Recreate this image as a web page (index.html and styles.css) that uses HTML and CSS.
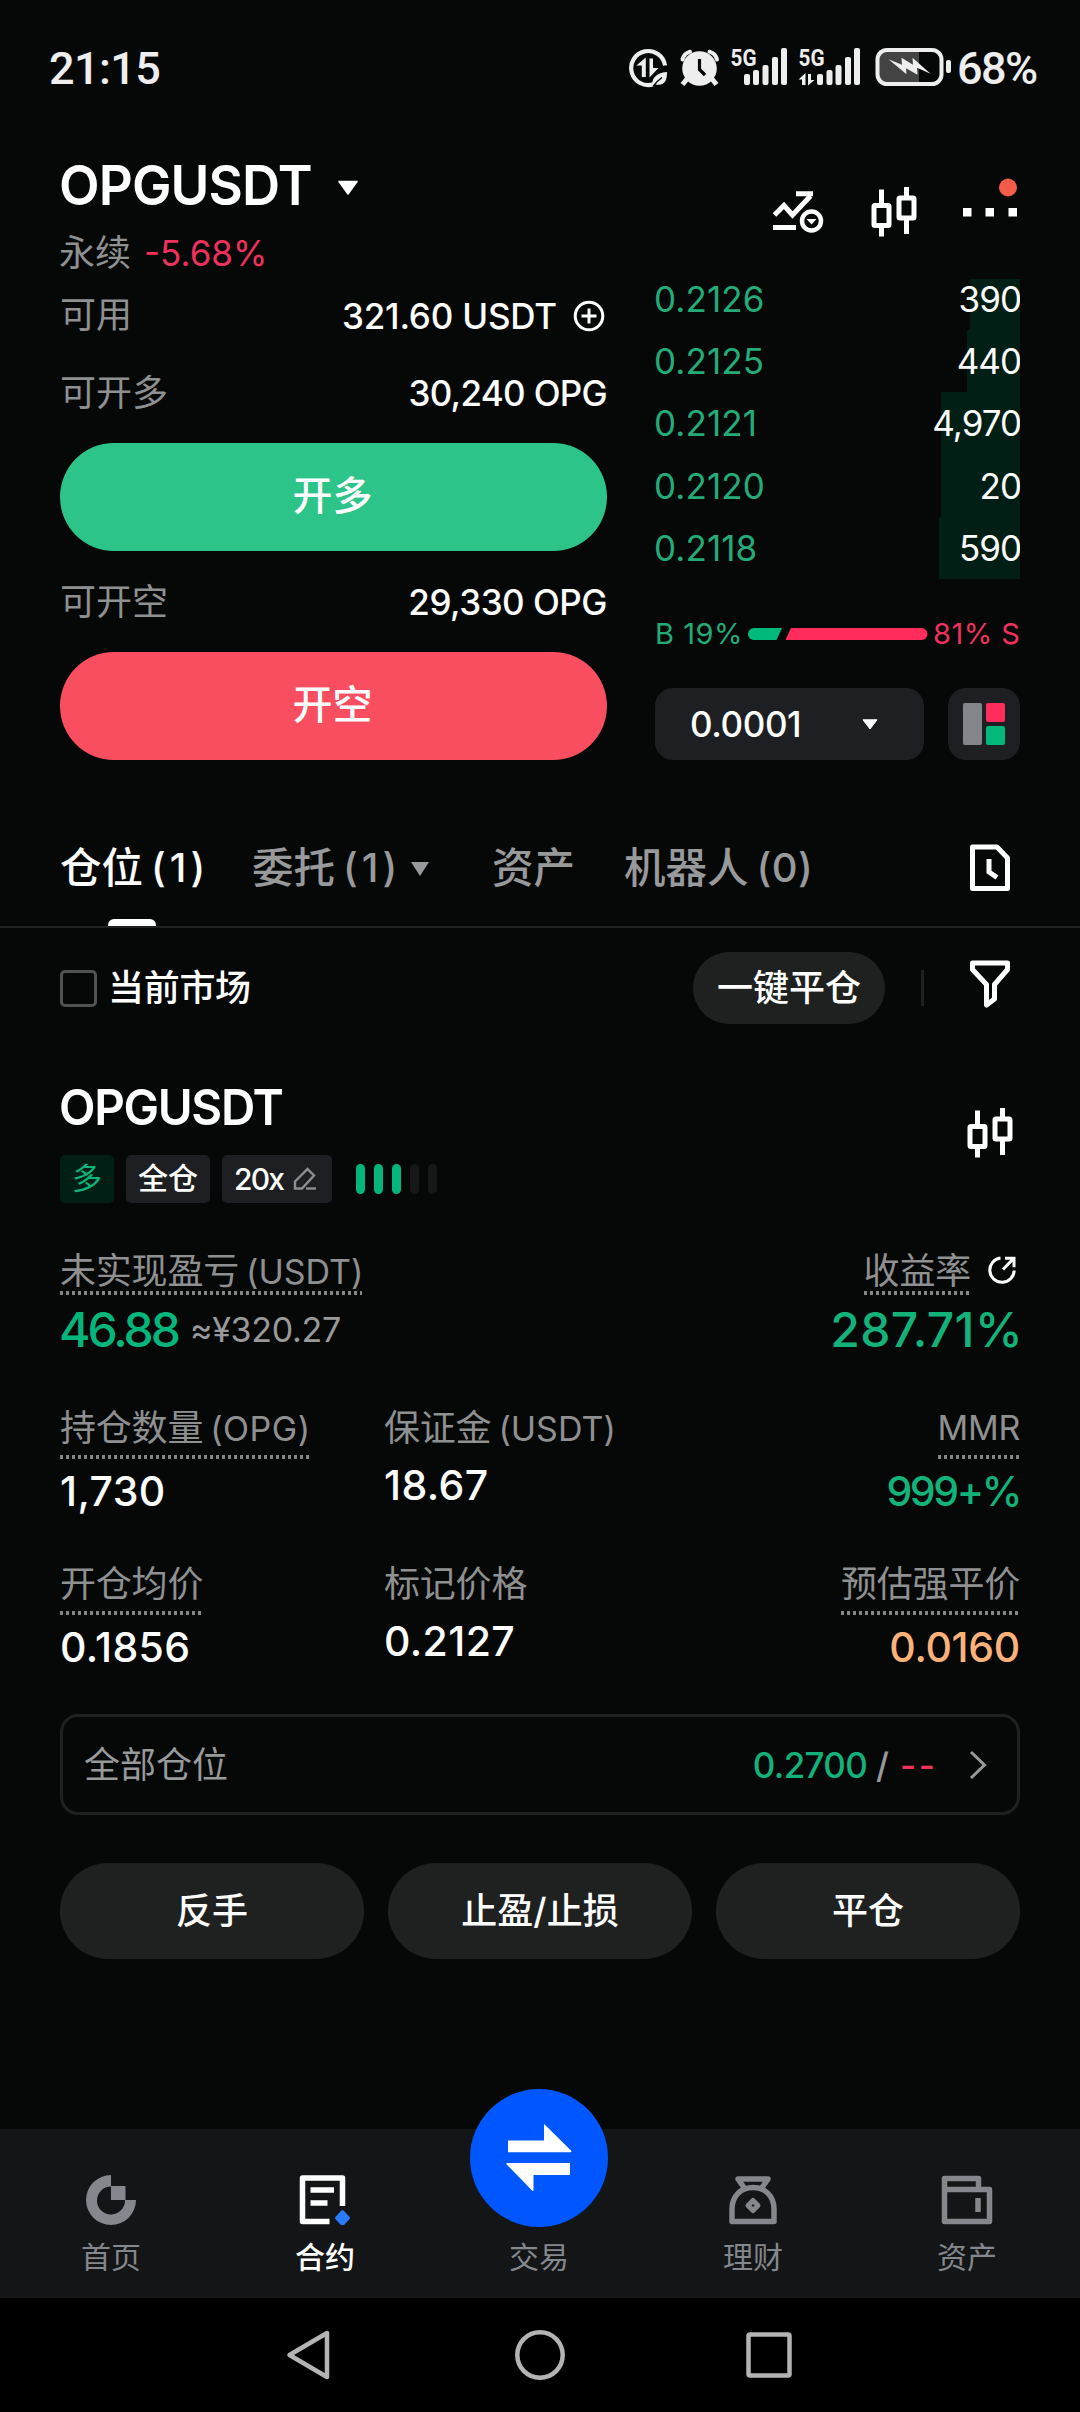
FILE: index.html
```html
<!DOCTYPE html>
<html lang="zh-CN">
<head>
<meta charset="utf-8">
<title>OPGUSDT 永续</title>
<link rel="stylesheet" href="styles.css">
</head>
<body>
<svg width="0" height="0" class="defs" aria-hidden="true">
  <symbol id="candles" viewBox="0 0 46 50">
    <path d="M10.5 2.5V17M10.5 39v10.5M35.5 0v10.5M35.5 32v15" fill="none" stroke="#fff" stroke-width="5"/>
    <rect x="3" y="18.5" width="15" height="20" rx="1" fill="none" stroke="#fff" stroke-width="5"/>
    <rect x="28" y="11" width="15" height="20" rx="1" fill="none" stroke="#fff" stroke-width="5"/>
  </symbol>
</svg>
<div class="screen">
  <div class="status">
    <span class="clock">21:15</span>
    <svg class="status-icons" width="324" height="44" viewBox="0 0 324 44" fill="#eee">
      <g>
        <path d="M25.500 38.200A17 17 0 1 1 37 19.500" fill="none" stroke="#eee" stroke-width="4.200"/>
        <path d="M17.800 11.500V31h-4V19.500h-5.500z M21.500 12.500h3.500V22h5.500l-9 9.500z"/>
        <path d="M24.500 40.500c-1-7 2-13.500 14.500-14.500 0 7-1.500 12.500-8.500 12.800-2.500 0-3.500-.5-3.500-.5z"/>
        <path d="M25 40.500q4-5.500 9-9" fill="none" stroke="#060807" stroke-width="1.500"/>
      </g>
      <g>
        <circle cx="71.500" cy="22.500" r="17.300"/>
        <path d="M59 33l-4.500 5.500M84 33l4.500 5.500" stroke="#eee" stroke-width="5"/>
        <path d="M54.500 13.500q1.500-6 7.500-7.800M89 13.500q-1.500-6-7.500-7.800" fill="none" stroke="#eee" stroke-width="4" stroke-linecap="round"/>
        <path d="M71.500 13v10.500l5.500 5.500" fill="none" stroke="#060807" stroke-width="3.200"/>
      </g>
      <g font-family="Roboto, sans-serif" font-weight="700" font-size="24">
        <text x="102.500" y="20" textLength="26" lengthAdjust="spacingAndGlyphs">5G</text>
        <text x="170.500" y="20" textLength="26" lengthAdjust="spacingAndGlyphs">5G</text>
      </g>
      <g>
        <rect x="116" y="28" width="6" height="11" rx="2"/><rect x="125" y="24" width="6" height="15" rx="2"/><rect x="134.500" y="19" width="6" height="20" rx="2"/><rect x="144" y="11" width="6" height="28" rx="2"/><rect x="153" y="2" width="6" height="37" rx="2"/>
        <rect x="189" y="28" width="6" height="11" rx="2"/><rect x="198.500" y="24" width="6" height="15" rx="2"/><rect x="207.500" y="19" width="6" height="20" rx="2"/><rect x="217" y="11" width="6" height="28" rx="2"/><rect x="226" y="2" width="6" height="37" rx="2"/>
        <path d="M177.500 27v12h-3.500v-5.500h-3.500z M180 28h3v6h3.500l-6.500 5.500z"/>
      </g>
      <g>
        <rect x="251" y="4" width="40" height="33" fill="#434343"/>
        <rect x="249.500" y="4" width="64" height="34" rx="9.500" fill="none" stroke="#eee" stroke-width="4"/>
        <rect x="318" y="14" width="5" height="13" rx="2"/>
        <path d="M260.500 13.200l13.500 5.500-.5-7 11.500 7-.5-7 18 16-13.500-6 .5 7-11.500-6.500.5 6z"/>
      </g>
    </svg>
    <span class="battery">68%</span>
  </div>

  <header class="head">
    <div class="pair">
      <div class="pair-line"><h1>OPGUSDT</h1>
        <svg width="22" height="16" viewBox="0 0 22 16"><path d="M2 1.500h18L11 14z" fill="#fff" stroke="#fff" stroke-width="1.500" stroke-linejoin="round"/></svg></div>
      <div class="pair-sub"><span>永续</span><b>-5.68%</b></div>
    </div>
    <div class="tools">
      <svg width="52" height="44" viewBox="0 0 52 44" fill="none" stroke="#fff" stroke-width="5">
        <path d="M2.500 24L12 14.500l8.500 9.500L38.500 5M24 2.700h17"/><path d="M1 36.500h23"/>
        <circle cx="39.500" cy="30" r="9.500" stroke-width="4.500"/><path d="M34.500 28h10l-5 5.500z" fill="#fff" stroke="none"/>
      </svg>
      <svg class="t-candles" width="46" height="50"><use href="#candles"/></svg>
      <svg class="t-more" width="54" height="42" viewBox="0 0 54 42"><path d="M0 30h8.500v8.500H0zM22.500 30H31v8.500h-8.500zM45.500 30H54v8.500h-8.500z" fill="#fff"/><circle cx="45" cy="9.500" r="9" fill="#f55b4b"/></svg>
    </div>
  </header>

  <main class="trade">
    <section class="order">
      <div class="row first"><span>可用</span><em class="avail">321.60 USDT</em>
        <svg width="32" height="32" viewBox="0 0 32 32" fill="none" stroke="#fff" stroke-width="3"><circle cx="16" cy="16" r="13.800"/><path d="M16 8.500v15M8.500 16h15"/></svg></div>
      <div class="row second"><span>可开多</span><em class="qty">30,240 OPG</em></div>
      <button class="open long">开多</button>
      <div class="row third"><span>可开空</span><em class="qty q2">29,330 OPG</em></div>
      <button class="open short">开空</button>
    </section>
    <section class="book">
      <div class="levels">
        <div class="level"><span>0.2126</span><i style="width:50px"></i><b>390</b></div>
        <div class="level"><span>0.2125</span><i style="width:53px"></i><b>440</b></div>
        <div class="level"><span>0.2121</span><i style="width:79px"></i><b>4,970</b></div>
        <div class="level"><span>0.2120</span><i style="width:79px"></i><b>20</b></div>
        <div class="level"><span>0.2118</span><i style="width:81px"></i><b>590</b></div>
      </div>
      <div class="ratio"><span class="buy">B 19%</span>
        <svg width="180" height="12" viewBox="0 0 180 12"><path d="M6 0h28l-5.500 12H6A6 6 0 0 1 6 0z" fill="#02b97c"/><path d="M43 0h130.500a6 6 0 0 1 0 12H37.500z" fill="#ff2c5c"/></svg>
        <span class="sell">81% S</span></div>
      <div class="depth">
        <div class="step"><span>0.0001</span><svg width="16" height="11" viewBox="0 0 16 11"><path d="M1 .8h14L8 10z" fill="#fff" stroke="#fff" stroke-linejoin="round"/></svg></div>
        <div class="layout"><svg width="42" height="42" viewBox="0 0 42 42"><rect width="19" height="42" rx="2" fill="#84858a"/><rect x="23" width="19" height="19" rx="2" fill="#ff2c5c"/><rect x="23" y="23" width="19" height="19" rx="2" fill="#02b97c"/></svg></div>
      </div>
    </section>
  </main>

  <nav class="tabs">
    <div class="tab t1 on">仓位<span class="n1">(1)</span></div>
    <div class="tab t2">委托<span class="n1">(1)</span><svg width="20" height="16" viewBox="0 0 20 16"><path d="M1 1h18l-9 14z" fill="#98999a"/></svg></div>
    <div class="tab t3">资产</div>
    <div class="tab t4">机器人<span class="n0">(0)</span></div>
    <svg class="history" width="40" height="48" viewBox="0 0 40 48" fill="none" stroke="#fff" stroke-width="5"><path d="M2.500 3h24.500L37.500 14v30.500h-35z" stroke-linejoin="round"/><path d="M19 15v13l8 5.500"/></svg>
  </nav>

  <div class="filters">
    <span class="check"></span><span class="cur">当前市场</span>
    <button class="close-all">一键平仓</button><span class="sep"></span>
    <svg width="40" height="48" viewBox="0 0 40 48" fill="none" stroke="#fff" stroke-width="5" stroke-linejoin="round"><path d="M2.500 3h35v6.500L24.500 24.500v14.500l-8 6V24.500L2.500 9.500z"/></svg>
  </div>

  <section class="position">
    <div class="p-head">
      <div><h2>OPGUSDT</h2>
        <div class="tags"><span class="tag green">多</span><span class="tag">全仓</span><span class="tag lev">20x<svg width="24" height="24" viewBox="0 0 24 24" fill="none" stroke="#8d8e92" stroke-width="2.400"><path d="M2 14.500L14.500 2l6.500 6.500L9 21.500H2z"/><path d="M13 21.500h10"/></svg></span>
          <span class="risk"><i class="a"></i><i class="a"></i><i class="a"></i><i></i><i></i></span></div></div>
      <svg class="p-candles" width="46" height="50"><use href="#candles"/></svg>
    </div>
    <div class="pnl">
      <div class="cell"><div class="label dot">未实现盈亏<span>(USDT)</span></div><div class="big"><strong>46.88</strong><span>≈¥320.27</span></div></div>
      <div class="cell right"><div class="label-line"><div class="label dot">收益率</div>
        <svg width="30" height="30" viewBox="0 0 30 30" fill="none" stroke="#fff" stroke-width="3"><path d="M13.500 3A12.200 12.200 0 1 0 27.200 15.500"/><path d="M16 14.500L26.500 3.500M18 3.200h9v9"/></svg></div>
        <div class="big roi">287.71%</div></div>
    </div>
    <div class="stats">
      <div class="cell"><div class="label dot l-opg">持仓数量<span>(OPG)</span></div><div class="val">1,730</div></div>
      <div class="cell"><div class="label">保证金<span>(USDT)</span></div><div class="val">18.67</div></div>
      <div class="cell right"><div class="label dot mmr">MMR</div><div class="val up">999+%</div></div>
      <div class="cell"><div class="label dot">开仓均价</div><div class="val">0.1856</div></div>
      <div class="cell"><div class="label">标记价格</div><div class="val">0.2127</div></div>
      <div class="cell right"><div class="label dot">预估强平价</div><div class="val warn">0.0160</div></div>
    </div>
    <div class="tpsl"><span>全部仓位</span><b class="tp">0.2700</b><b class="slash">/</b><b class="sl">--</b>
      <svg width="18" height="30" viewBox="0 0 18 30" fill="none" stroke="#98999a" stroke-width="3"><path d="M2 2l13.500 13L2 28"/></svg></div>
    <div class="actions"><button>反手</button><button>止盈/止损</button><button>平仓</button></div>
  </section>

  <footer class="dock">
    <div class="item"><svg width="50" height="50" viewBox="0 0 50 50" fill="#84878b"><path d="M25 0v11.500A14 14 0 1 0 39 25h11A25 25 0 1 1 25 0z"/><path d="M25 11h14.500v14H25z"/></svg>首页</div>
    <div class="item on"><svg width="52" height="50" viewBox="0 0 52 50"><path d="M43.500 31V3h-40v43.500h27" fill="none" stroke="#fff" stroke-width="5.500" stroke-linejoin="round"/><path d="M11.500 15h23.500M11.500 28h17" stroke="#fff" stroke-width="5.500"/><path d="M43.500 36.500l6 6.500-6 6.500-6-6.500z" fill="#2b7cfb" stroke="#2b7cfb" stroke-width="3" stroke-linejoin="round"/></svg>合约</div>
    <div class="item trade-item"><span class="orb"><svg width="66" height="68" viewBox="0 0 66 68" fill="#fff"><path d="M2 16.500h36V1.200q0-1.500 1.200-.3L65 26.500q1 1.700-.5 1.700H2z"/><path d="M64 39H1.200q-1.500 0-.5 1.500L26 66.500q1.500 1 1.500-.5V51H64z"/></svg></span>交易</div>
    <div class="item"><svg width="50" height="50" viewBox="0 0 50 50" fill="none" stroke="#84878b" stroke-width="5.500" stroke-linejoin="round"><path d="M17 14L10 4h30l-7 10"/><path d="M4 46.500V34C4 21 13 12.500 25 12.500S46 21 46 34v12.500z"/><path d="M25 25.500l5 5-5 5-5-5z" stroke-width="5"/></svg>理财</div>
    <div class="item"><svg width="52" height="50" viewBox="0 0 52 50" fill="none" stroke="#84878b" stroke-width="5.500" stroke-linejoin="round"><path d="M3.500 14.500h45v32h-45V3.500h34v11"/><path d="M37 23v14"/></svg>资产</div>
  </footer>
  <div class="sysnav">
    <svg width="44" height="52" viewBox="0 0 44 52"><path d="M41 4v44L3.500 26z" fill="none" stroke="#b4b4b4" stroke-width="4.500" stroke-linejoin="round"/></svg>
    <svg width="50" height="50" viewBox="0 0 50 50"><circle cx="25" cy="25" r="22.700" fill="none" stroke="#b4b4b4" stroke-width="4.500"/></svg>
    <svg width="46" height="46" viewBox="0 0 46 46"><rect x="2.500" y="2.500" width="41" height="41" rx="1.500" fill="none" stroke="#b4b4b4" stroke-width="4.500"/></svg>
  </div>
</div>
</body>
</html>
```
FILE: styles.css
```css
* { box-sizing: border-box; margin: 0; padding: 0; }
body { background: #060807; color: #fff; font-family: Inter, "Noto Sans CJK SC", sans-serif; font-size: 36px; line-height: 60px; }
.defs { position: absolute; }
svg { display: block; flex: none; }
button { border: 0; color: #fff; font: inherit; font-weight: 500; }
em, i { font-style: normal; }
b { font-weight: 400; }
.screen { width: 1080px; height: 2412px; display: flex; flex-direction: column; overflow: hidden; }

.status { height: 136px; display: flex; align-items: center; padding: 0 40px 0 49px; color: #eee; font: 500 45px/60px Roboto, sans-serif; }
.status span { margin-top: 2px; }
.clock { letter-spacing: -.6px; }
.status-icons { margin-left: auto; }
.status .battery { letter-spacing: -1.6px; margin-left: 5px; width: 83px; white-space: nowrap; }

.head { height: 143px; display: flex; justify-content: space-between; padding: 19px 63px 0 59px; }
.pair-line { display: flex; align-items: center; gap: 8px; height: 60px; }
h1 { width: 270px; font-size: 55px; line-height: 60px; font-weight: 600; letter-spacing: -.9px; transform: scaleX(.96); transform-origin: left; }
.pair-line svg { margin-top: 6px; }
.pair-sub { display: flex; gap: 13px; margin-top: 16px; line-height: 44px; color: #8f9091; }
.pair-sub b { font-size: 35px; color: #ee315d; }
.tools { display: flex; padding-top: 23px; }
.tools > svg:first-child { margin-top: 13px; }
.t-candles { margin: 9px 0 0 47px; }
.t-more { margin-left: 46px; }

.trade { height: 481px; display: flex; gap: 48px; padding: 0 60px; }
.order { width: 547px; }
.row { display: flex; align-items: center; font-size: 36px; color: #8f9091; white-space: nowrap; }
.row em { margin-left: auto; font-size: 35px; font-weight: 500; color: #fff; }
.row .avail { letter-spacing: -.2px; }
.row .qty { letter-spacing: -.7px; }
.row .q2 { letter-spacing: -.5px; }
.row svg { margin: 0 2px 0 16px; }
.first { height: 73px; }
.first span { margin-top: -2px; }
.second { height: 81px; margin-bottom: 10px; }
.third { height: 101px; }
.open { display: block; width: 547px; height: 108px; border-radius: 54px; font-size: 40px; padding: 0 2px 2px 0; }
.long { background: #2dc489; }
.short { background: #f84e60; }

.book { width: 365px; font-size: 35px; }
.levels { height: 300px; overflow: hidden; display: flex; flex-direction: column; justify-content: flex-end; }
.level { position: relative; flex: none; height: 62.2px; line-height: 62px; display: flex; justify-content: space-between; }
.level span { margin-left: -1px; color: #24ab78; letter-spacing: .1px; }
.level i { position: absolute; right: 0; top: 0; bottom: 0; background: #021f16; }
.level b { position: relative; letter-spacing: -1px; margin-right: -1px; }
.ratio { height: 109px; display: flex; align-items: center; font-size: 29px; white-space: nowrap; }
.ratio span { letter-spacing: .5px; }
.ratio svg { margin: 0 5px 0 6px; }
.buy { width: 87px; color: #24ab78; }
.sell { color: #ee315d; }
.depth { display: flex; justify-content: space-between; }
.step { width: 269px; height: 72px; border-radius: 18px; background: #1e1f22; display: flex; align-items: center; justify-content: space-between; padding: 0 46px 0 35px; font-weight: 500; letter-spacing: -.4px; }
.layout { width: 72px; height: 72px; border-radius: 18px; background: #1e1f22; padding: 15px; }

.tabs { height: 168px; display: flex; align-items: flex-start; padding: 78px 70px 0 60px; border-bottom: 2px solid #1f2121; font-size: 41.5px; font-weight: 500; color: #98999a; white-space: nowrap; }
.tab { display: flex; align-items: flex-start; height: 88px; position: relative; }
.t1 { width: 192px; }
.t2 { width: 240px; }
.t3 { width: 132px; }
.tab span { margin-left: 8px; font-size: 40px; }
.n1 { letter-spacing: 4px; }
.n0 { letter-spacing: .5px; }
.tab svg { margin: 23px 0 0 9px; }
.on { color: #fff; }
.t1::after { content: ""; position: absolute; left: 48px; bottom: 0; width: 48px; height: 7px; border-radius: 6px 6px 0 0; background: #fff; }
.history { margin: 6px 0 0 auto; }

.filters { height: 120px; display: flex; align-items: center; padding: 0 70px 0 60px; font-weight: 500; }
.check { width: 37px; height: 37px; border: 3px solid #505153; border-radius: 5px; }
.cur { margin-left: 11px; letter-spacing: -.3px; }
.close-all { margin-left: auto; width: 192px; height: 72px; border-radius: 36px; background: #1f2121; }
.sep { width: 3px; height: 36px; background: #1f2121; margin: 0 46px 0 36px; }
.filters svg { margin-top: -8px; }

.position { padding: 29px 60px 0; }
.p-head { display: flex; justify-content: space-between; }
h2 { width: 300px; margin-left: -1px; font-size: 50px; line-height: 60px; font-weight: 600; letter-spacing: -1.4px; transform: scaleX(.95); transform-origin: left; }
.tags { display: flex; gap: 12px; margin-top: 18px; }
.tag { height: 48px; line-height: 47px; padding: 0 12px; border-radius: 5px; background: #1e1f22; font-size: 30px; font-weight: 500; }
.tag:not(.green):not(.lev) { width: 84px; }
.tag.green { width: 54px; background: #021f16; color: #0cb57b; font-weight: 400; }
.lev { width: 110px; display: flex; align-items: center; letter-spacing: -1.8px; padding-right: 15px; justify-content: space-between; }
.risk { display: flex; gap: 9px; margin: 9px 0 0 12px; }
.risk i { width: 9px; height: 30px; border-radius: 5px; background: #161818; }
.risk i.a { background: #04b67c; }
.p-candles { margin: 31px 7px 0 0; }

.label { position: relative; width: max-content; height: 40px; line-height: 40px; font-size: 36px; color: #8f9091; white-space: nowrap; letter-spacing: -.2px; }
.label span { margin: 0 -1px 0 7px; font-size: 34px; letter-spacing: 0; }
.l-opg span { letter-spacing: .5px; }
.dot::after { content: ""; position: absolute; left: 0; right: 0; top: 47px; height: 4px; background: repeating-linear-gradient(90deg, #848585 0 3px, transparent 3px 6px); }
.right { display: flex; flex-direction: column; align-items: flex-end; }
.pnl { display: flex; justify-content: space-between; margin-top: 48px; }
.pnl .dot::after { top: 40px; }
.label-line { display: flex; }
.label-line svg { margin: 4px 3px 0 16px; }
.big { display: flex; align-items: center; height: 60px; line-height: 60px; margin-top: 9px; font-size: 48px; }
.big strong { margin-left: -1px; font-weight: 500; color: #04b67c; letter-spacing: -3px; }
.big span { margin-left: 12px; font-size: 34px; color: #98999a; letter-spacing: -.3px; }
.roi { font-weight: 500; color: #13b27b; letter-spacing: .4px; margin-right: -3px; }
.stats { display: grid; grid-template-columns: 324px 324px 312px; grid-template-rows: 156px 150px; margin-top: 48px; }
.val { height: 50px; line-height: 50px; margin-top: 12px; font-size: 41px; font-weight: 500; letter-spacing: .4px; }
.dot + .val { margin-top: 18px; }
.mmr { font-size: 34px; letter-spacing: -.3px; }
.up { color: #13b27b; letter-spacing: -2.4px; }
.warn { color: #fbb27a; letter-spacing: -.3px; }

.tpsl { height: 101px; border: 3px solid #1f2121; border-radius: 18px; display: flex; align-items: center; padding: 0 30px 0 21px; font-size: 35px; color: #98999a; white-space: nowrap; }
.tpsl span { margin-right: auto; font-size: 36px; }
.tpsl b { font-weight: 500; }
.tp { color: #13b27b; letter-spacing: -.7px; }
.slash { margin-left: 9px; }
.sl { width: 36px; margin-left: 11px; color: #ee315d; letter-spacing: 2.5px; }
.tpsl svg { margin-left: 33px; }
.actions { display: grid; grid-template-columns: repeat(3, 304px); gap: 24px; margin-top: 48px; }
.actions button { height: 96px; border-radius: 48px; background: #1f2121; font-size: 36px; padding-bottom: 1px; }

.dock { margin-top: auto; height: 169px; flex: none; display: grid; grid-template-columns: repeat(5, 214px); justify-content: center; padding-right: 2px; background: #131517; font-size: 30px; font-weight: 400; line-height: 40px; color: #84878b; }
.item { position: relative; display: flex; flex-direction: column; align-items: center; padding-top: 46px; gap: 12px; }
.item.on { color: #fff; font-weight: 500; }
.trade-item { padding-top: 108px; }
.orb { position: absolute; left: 38px; top: -40px; width: 138px; height: 138px; border-radius: 50%; background: #0057ff; display: flex; align-items: center; justify-content: center; }
.sysnav { height: 114px; flex: none; background: #000; display: flex; align-items: center; }
.sysnav svg:nth-child(1) { margin-left: 286px; }
.sysnav svg:nth-child(2) { margin-left: 185px; }
.sysnav svg:nth-child(3) { margin-left: 181px; }
```
